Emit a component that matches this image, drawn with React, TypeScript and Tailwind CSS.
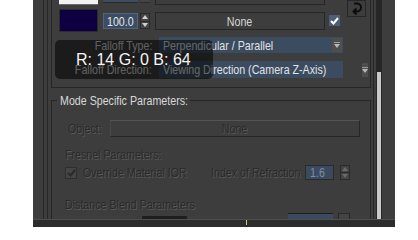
import React from "react";

function T({
  children,
  o = "l",
  className = "",
}: {
  children: React.ReactNode;
  o?: "l" | "r" | "c";
  className?: string;
}) {
  const origin = o === "l" ? "origin-left" : o === "r" ? "origin-right" : "origin-center";
  return (
    <span className={`inline-block whitespace-nowrap scale-x-[0.82] ${origin} ${className}`}>
      {children}
    </span>
  );
}

const DIM = "text-[#2a2a2a] [text-shadow:1px_1px_0_#5a5a5a]";

function Spin({ dim = false }: { dim?: boolean }) {
  const c = dim ? "#6a6a6a" : "#d0d0d0";
  return (
    <div className="w-[10px] h-full flex flex-col bg-[#444444] border border-[#2a2a2a]">
      <div className="flex-1 flex items-center justify-center">
        <svg width="6" height="4" viewBox="0 0 6 4">
          <path d="M3 0 L6 4 H0 Z" fill={c} />
        </svg>
      </div>
      <div className="h-px bg-[#2a2a2a]" />
      <div className="flex-1 flex items-center justify-center">
        <svg width="6" height="4" viewBox="0 0 6 4">
          <path d="M0 0 H6 L3 4 Z" fill={c} />
        </svg>
      </div>
    </div>
  );
}

function Dropdown({ text }: { text: string }) {
  return (
    <div className="w-[184px] h-full bg-[#3b4c61] flex items-center">
      <div className="flex-1 pl-[4px] text-[13px] leading-[13px] text-[#e2e2e2]">
        <T>{text}</T>
      </div>
      <div className="w-[10px] h-[14px] mr-px bg-[#4e4e4e] flex flex-col items-center justify-center gap-[1px]">
        <div className="w-[6px] h-px bg-[#9a9a9a]" />
        <svg width="6" height="4" viewBox="0 0 6 4">
          <path d="M0 0 H6 L3 4 Z" fill="#b8b8b8" />
        </svg>
      </div>
    </div>
  );
}

export default function App() {
  return (
    <div className="w-[418px] h-[240px] bg-white flex items-start relative overflow-hidden font-['Liberation_Sans',Arial,sans-serif]">
      <div className="w-[33px] shrink-0" />
      <div className="w-[362px] h-[227px] bg-[#3d3d3d] flex flex-col shrink-0">
        <div className="h-[219px] flex overflow-hidden">
          <div className="w-[10px] shrink-0" />
          <div className="w-px bg-[#262626] shrink-0" />
          <div className="w-[3px] shrink-0" />
          <div className="w-px bg-[#262626] shrink-0" />
          <div className="w-[3px] shrink-0" />
          <div className="w-[320px] shrink-0 flex flex-col">
            {/* Group 1 */}
            <div className="h-[88px] shrink-0 border-x border-b border-[#262626] flex flex-col">
              <div className="h-[32px] flex items-start">
                <div className="w-[7px]" />
                <div className="w-[39px] flex flex-col">
                  <div className="h-[4px] bg-[#f2f2f2]" />
                  <div className="h-px bg-[#6a6a6a]" />
                  <div className="h-[4px]" />
                  <div className="h-[23px] bg-[#0e0040] border border-[#2c2c2c]" />
                </div>
                <div className="w-[5px]" />
                <div className="w-[35px] flex flex-col">
                  <div className="h-[3px] bg-[#3d4e63] border-b border-[#2a2a2a]" />
                  <div className="h-[10px]" />
                  <div className="h-[16px] bg-[#3c4d63] border border-[#52647b] flex items-center pl-[3px] text-[13px] leading-[13px] text-[#e6e6e6]">
                    <T>100.0</T>
                  </div>
                </div>
                <div className="w-[2px]" />
                <div className="w-[10px] flex flex-col">
                  <div className="h-[3px] bg-[#444444] border-b border-[#2a2a2a]" />
                  <div className="h-[10px]" />
                  <div className="h-[16px]">
                    <Spin />
                  </div>
                </div>
                <div className="w-[5px]" />
                <div className="w-[170px] flex flex-col">
                  <div className="h-[5px] border-x border-b border-[#262626]" />
                  <div className="h-[7px]" />
                  <div className="h-[18px] border border-[#262626] flex items-center justify-center text-[13px] leading-[13px] text-[#d8d8d8]">
                    <T o="c">None</T>
                  </div>
                </div>
                <div className="w-[4px]" />
                <div className="w-[11px] pt-[15px]">
                  <div className="h-[11px] w-[11px] bg-[#4d5e79] flex items-center justify-center">
                    <svg width="9" height="8" viewBox="0 0 9 8">
                      <path d="M1 4 L3.5 6.5 L8 1" stroke="#ffffff" strokeWidth="2" fill="none" />
                    </svg>
                  </div>
                </div>
                <div className="w-[7px]" />
                <div className="w-[19px] h-[17px] border border-[#262626] flex items-center justify-center">
                  <svg width="12" height="14" viewBox="0 0 12 14">
                    <path d="M3 1.5 H6 A4 4 0 0 1 6 9.5 H3" stroke="#0c0c0c" strokeWidth="2" fill="none" />
                    <path d="M5.5 6.5 L2.5 9.5 L5.5 12.5" stroke="#0c0c0c" strokeWidth="2" fill="none" />
                  </svg>
                </div>
              </div>
              <div className="h-[5px]" />
              <div className="h-[16px] flex">
                <div className="w-[100px] flex items-center justify-end text-[13px] leading-[13px] text-[#d8d8d8]">
                  <T o="r">Falloff Type:</T>
                </div>
                <div className="w-[7px]" />
                <Dropdown text="Perpendicular / Parallel" />
              </div>
              <div className="h-[8px]" />
              <div className="h-[17px] flex">
                <div className="w-[100px] flex items-center justify-end text-[13px] leading-[13px] text-[#d8d8d8]">
                  <T o="r">Falloff Direction:</T>
                </div>
                <div className="w-[7px]" />
                <Dropdown text="Viewing Direction (Camera Z-Axis)" />
              </div>
            </div>

            {/* Group 2 */}
            <div className="h-[6px] shrink-0" />
            <fieldset className="border border-[#262626] h-[140px] shrink-0">
              <legend className="ml-[5px] pl-[3px] w-[133px] h-[13px] text-[13px] leading-[13px] text-[#d8d8d8]">
                <T>Mode Specific Parameters:</T>
              </legend>
              <div className="flex flex-col">
                <div className="h-[17px] mt-[13px] flex">
                  <div className="w-[16px]" />
                  <div className={`w-[42px] flex items-center text-[13px] leading-[13px] ${DIM}`}>
                    <T>Object:</T>
                  </div>
                  <div
                    className={`w-[250px] border border-[#262626] border-t-[#555555] border-l-[#4a4a4a] flex items-center justify-center text-[13px] leading-[13px] ${DIM}`}
                  >
                    <T o="c">None</T>
                  </div>
                </div>
                <div className={`h-[13px] mt-[11px] pl-[13px] text-[13px] leading-[13px] ${DIM}`}>
                  <T>Fresnel Parameters:</T>
                </div>
                <div className="h-[15px] mt-[4px] flex items-center">
                  <div className="w-[13px]" />
                  <div className="w-[12px] h-[12px] bg-[#454545] border border-[#2e2e2e] flex items-center justify-center">
                    <svg width="9" height="8" viewBox="0 0 9 8">
                      <path d="M1 4 L3.5 6.5 L8 1" stroke="#2a2a2a" strokeWidth="2" fill="none" />
                    </svg>
                  </div>
                  <div className="w-[6px]" />
                  <div className={`w-[128px] text-[13px] leading-[13px] ${DIM}`}>
                    <T>Override Material IOR</T>
                  </div>
                  <div className={`w-[94px] text-[13px] leading-[13px] ${DIM}`}>
                    <T>Index of Refraction</T>
                  </div>
                  <div className="w-[29px] h-[15px] bg-[#3b4a5e] border border-[#2a2a2a] flex items-center pl-[4px] text-[13px] leading-[13px] text-[#7d8ea6]">
                    <T>1.6</T>
                  </div>
                  <div className="w-[6px]" />
                  <div className="h-[15px]">
                    <Spin dim />
                  </div>
                </div>
                <div className={`h-[13px] mt-[18px] pl-[13px] text-[13px] leading-[13px] ${DIM}`}>
                  <T>Distance Blend Parameters</T>
                </div>
                <div className="h-[12px] mt-[2px] flex items-start">
                  <div className="w-[90px]" />
                  <div className="w-[45px] h-[6px] mt-[3px] bg-[#1e1e1e]" />
                  <div className="w-[101px]" />
                  <div className="w-[45px] h-[8px] bg-[#3a4a60] border-t border-[#1e1e1e]" />
                  <div className="w-[5px]" />
                  <div className="w-[12px] h-[8px] bg-[#444444] border border-[#2a2a2a]" />
                </div>
              </div>
            </fieldset>
          </div>
          <div className="w-[2px] shrink-0" />
          <div className="w-px bg-[#262626] shrink-0" />
          <div className="w-[2px] shrink-0" />
          <div className="w-[6px] shrink-0 bg-[#262626] flex flex-col">
            <div className="h-[72px]" />
            <div className="flex-1 mx-px bg-[#c9c9c9]" />
          </div>
          <div className="w-[13px] shrink-0" />
        </div>
        <div className="h-[8px] bg-[#2c2c2c] border-t border-[#4e4e4e] flex">
          <div className="w-[213px]" />
          <div className="w-px h-[5px] bg-[#d8c860]" />
        </div>
      </div>
      <div className="absolute left-[55px] top-[40px] w-[158px] h-[39px] rounded-[5px] bg-black/55 pl-[21px] pt-[11px]">
        <div className="text-[16px] leading-[18px] text-[#f4f4f4] whitespace-nowrap">R: 14 G: 0 B: 64</div>
      </div>
    </div>
  );
}
